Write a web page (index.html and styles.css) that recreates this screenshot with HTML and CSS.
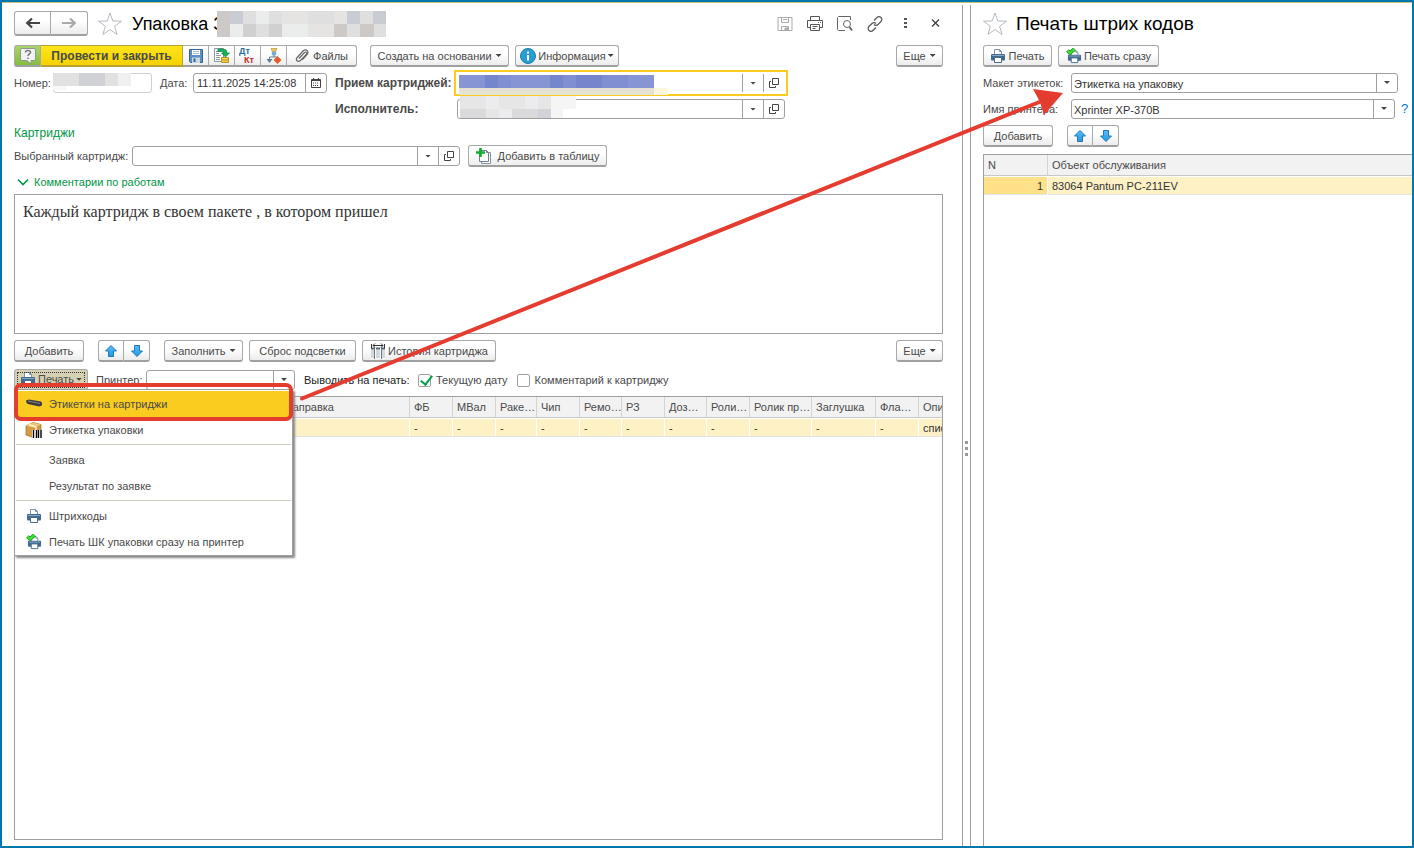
FILE: index.html
```html
<!DOCTYPE html>
<html lang="ru">
<head>
<meta charset="utf-8">
<title>Упаковка</title>
<link rel="stylesheet" href="styles.css">
</head>
<body>
<svg class="defs" aria-hidden="true">
  <defs>
    <linearGradient id="blue" x1="0" y1="0" x2="0" y2="1"><stop offset="0" stop-color="#4fc0ff"/><stop offset="1" stop-color="#2a96e0"/></linearGradient>
    <symbol id="star" viewBox="0 0 24 24"><path d="M12 1l2.800 8 8.700.2-6.900 5.100 2.500 8.200-7.100-4.900L4.900 22.500l2.500-8.200L.5 9.200l8.700-.2z" fill="#fff" stroke="#b4bac0"/></symbol>
    <symbol id="up" viewBox="0 0 12 12"><path d="M6 .5L11.500 6H8.500v5.500h-5V6H.5z" fill="url(#blue)" stroke="#2277b4"/></symbol>
    <symbol id="down" viewBox="0 0 12 12"><path d="M6 11.500L11.500 6H8.500V.5h-5V6H.5z" fill="url(#blue)" stroke="#2277b4"/></symbol>
    <symbol id="printer" viewBox="0 0 16 16"><path d="M4.500 6.500v-5h5l2 2v3" fill="#fff" stroke="#7d93a8"/><path d="M9.500 1.500v2h2" fill="none" stroke="#7d93a8"/><rect x="1" y="6" width="14" height="6.500" rx="1" fill="#416a93"/><path d="M2 7.500h12" stroke="#86a8c8"/><path d="M4.500 9.500h7v5h-7z" fill="#fff" stroke="#4a6c8c"/></symbol>
    <symbol id="printer-check" viewBox="0 0 16 16"><use href="#printer" x="1" y="1" width="15" height="15"/><path d="M1.500 2.500l2.500 2.500 4.500-4" fill="none" stroke="#16831b" stroke-width="3.800"/><path d="M1.500 2.500l2.500 2.500 4.500-4" fill="none" stroke="#3fe035" stroke-width="2.400"/></symbol>
    <symbol id="open" viewBox="0 0 10 10"><path d="M3.500.5h6v6h-6zM2 3.500H.5v6h6V8" fill="none" stroke="#444"/></symbol>
  </defs>
</svg>
<div class="app">
  <main class="pane pane-main">
    <header class="title-row">
      <div class="group nav">
        <button class="btn" type="button" aria-label="Назад"><svg width="16" height="12" viewBox="0 0 16 12"><path d="M15 6H3M7 1.500L2.200 6 7 10.500" fill="none" stroke="#444" stroke-width="2.200"/></svg></button>
        <button class="btn" type="button" aria-label="Вперед"><svg width="16" height="12" viewBox="0 0 16 12"><path d="M1 6h12M9 1.500L13.800 6 9 10.500" fill="none" stroke="#aaa" stroke-width="2.200"/></svg></button>
      </div>
      <svg class="star" width="24" height="24"><use href="#star"/></svg>
      <h1>Упаковка З</h1>
      <svg class="mosaic" width="169" height="26" viewBox="0 0 169 26" shape-rendering="crispEdges">
        <path fill="#dfdfe0" d="M0 0h170v26H0z"/>
        <path fill="#ccc9c7" d="M0 0h13v26H0zM117 13h13v13h-13zM143 13h14v13h-14z"/>
        <path fill="#c9cdd3" d="M13 0h13v13H13zM130 0h13v13h-13zM156 0h14v13h-14z"/>
        <path fill="#ebecec" d="M13 13h13v13H13zM39 0h13v13H39zM65 13h26v13H65z"/>
        <path fill="#d0d0d0" d="M26 13h13v13H26zM52 13h13v13H52z"/>
        <path fill="#e6e4e3" d="M65 0h26v13H65zM91 13h26v13H91zM117 0h13v13h-13z"/>
      </svg>
      <div class="window-tools">
        <button type="button" aria-label="Сохранить"><svg width="16" height="16" viewBox="0 0 16 16" fill="none" stroke="#aaa"><path d="M1 1.500h14v13H1zM4.500 1.500v5h7v-5M6 3.500h4M4.500 14.500v-4h7v4"/><path fill="#aaa" d="M8 12h3v2H8z"/></svg></button>
        <button type="button" aria-label="Печать"><svg width="16" height="16" viewBox="0 0 16 16" fill="none" stroke="#555"><path d="M3.500 4.500v-4h9v4M3.500 11.500h-3v-7h15v7h-3M3.500 8.500h9v6h-9zM5.500 10.500h5M5.500 12.500h3M11 6.500h1M13 6.500h1"/></svg></button>
        <button type="button" aria-label="Просмотр"><svg width="16" height="16" viewBox="0 0 16 16" fill="none" stroke="#666"><path d="M8 14.500H1.500l-1-1V1.500l1-1h12V4"/><circle cx="10" cy="8" r="3.500"/><path d="M12.500 11l2.500 3.500" stroke-width="2"/></svg></button>
        <button type="button" aria-label="Ссылка"><svg width="16" height="16" viewBox="0 0 16 16" fill="none" stroke="#555" stroke-width="1.200"><path d="M7 4.500l3-3a2.800 2.800 0 0 1 4 0 2.800 2.800 0 0 1 0 4L11 8.500a2.800 2.800 0 0 1-4 0M9 11.500l-3 3a2.800 2.800 0 0 1-4 0 2.800 2.800 0 0 1 0-4L5 7.500a2.800 2.800 0 0 1 4 0"/></svg></button>
        <button type="button" aria-label="Меню"><svg width="16" height="16" viewBox="0 0 16 16" fill="#555"><path d="M7 2h3v2H7zM7 6h3v2H7zM7 10h3v2H7z"/></svg></button>
        <button type="button" aria-label="Закрыть"><svg width="16" height="16" viewBox="0 0 16 16" fill="none" stroke="#444" stroke-width="1.400"><path d="M5 3.500l7 7M12 3.500l-7 7"/></svg></button>
      </div>
    </header>

    <div class="toolbar">
      <div class="group commands">
        <button class="btn help" type="button" aria-label="Справка"><svg width="18" height="18" viewBox="0 0 18 18"><path d="M3 1.500h12q1.500 0 1.500 1.500v9q0 1.500-1.500 1.500h-3V17l-4-3.500H3Q1.500 13.500 1.500 12V3Q1.500 1.500 3 1.500z" fill="#f1f3f2" stroke="#8b9a86"/><path d="M6.500 5.500q0-2 2.500-2t2.500 2c0 1.500-2.500 1.500-2.500 3.500M9 10.500v1.500" fill="none" stroke="#777" stroke-width="1.500"/></svg></button>
        <button class="btn primary" type="button">Провести и закрыть</button>
        <button class="btn icon" type="button" aria-label="Записать"><svg width="16" height="16" viewBox="0 0 16 16"><path d="M1.500 1.500h13v13h-12l-1-1z" fill="#5b8fc5" stroke="#376290"/><path d="M4 2h8v5H4z" fill="#fff"/><path d="M5 3.500h6M5 5.500h6" stroke="#aabdcd"/><path d="M4 9.500h8V15H4z" fill="#cbd8e3"/><path d="M5.500 10.500h2V14h-2z" fill="#376290"/></svg></button>
        <button class="btn icon" type="button" aria-label="Провести"><svg width="17" height="17" viewBox="0 0 17 17"><path d="M1.500 1.500h9v13h-9z" fill="#fff" stroke="#8999a6"/><path d="M3 4.500h4M3 6.500h3M3 8.500h5M3 10.500h4M3 12.500h4" stroke="#8999a6"/><path d="M5 2h5q4 0 4 4h2.500L12.500 10 8.500 6H11q0-1.500-2-1.500H5z" fill="#14b45a" stroke="#08843c" stroke-width=".7"/><path d="M8.500 10.500h7v5h-7z" fill="#f9d34b" stroke="#bd922a"/><path d="M8.500 13h7" stroke="#bd922a"/></svg></button>
        <button class="btn icon" type="button" aria-label="Проводки"><svg width="17" height="17" viewBox="0 0 17 17" font-family="Liberation Sans" font-weight="bold" font-size="9"><text x="0" y="7" fill="#2a709b">Дт</text><text x="5" y="16" fill="#c52b1e">Кт</text></svg></button>
        <button class="btn icon" type="button" aria-label="Структура"><svg width="16" height="16" viewBox="0 0 16 16"><path d="M8 6v3M3.500 12V9h8" fill="none" stroke="#687c8c"/><path d="M5 .5h6L9.500 4H6.500z" fill="#edc654" stroke="#b18a2b" stroke-width=".6"/><circle cx="8" cy="5.500" r="2.300" fill="#74acd7"/><path d="M.5 11h6l-3 4z" fill="#587b96"/><path d="M11.500 8l4 4-4 4-4-4z" fill="#e25d2c"/></svg></button>
        <button class="btn files" type="button"><svg width="14" height="14" viewBox="0 0 14 14"><path d="M4 9.500l5.500-6q1.200-1 2 0 .8 1-.2 2L5.500 11.500q-2 1.700-3.500.3-1.400-1.600.2-3.300L8 2q2.500-2 4.300-.3 1.500 2-.5 4.200L7.500 10.500" fill="none" stroke="#666" stroke-width="1.200"/></svg>Файлы</button>
      </div>
      <button class="btn create" type="button">Создать на основании<i class="caret"></i></button>
      <button class="btn info" type="button"><svg width="16" height="16" viewBox="0 0 16 16"><circle cx="8" cy="8" r="7.500" fill="#279dd3" stroke="#187bab"/><path d="M8 3.500v2M8 7v5.500" stroke="#fff" stroke-width="2"/></svg>Информация<i class="caret"></i></button>
      <button class="btn more" type="button">Еще<i class="caret"></i></button>
    </div>

    <div class="fields">
      <div class="field-line">
        <label for="num">Номер:</label>
        <div class="combo number"><input id="num"><svg class="mosaic-in" width="78" height="17" viewBox="0 0 78 17" shape-rendering="crispEdges"><path fill="#e1e1e2" d="M0 0h78v13H0z"/><path fill="#d0d1d5" d="M26 0h26v13H26z"/><path fill="#eff0f2" d="M65 0h13v13H65z"/><path fill="#f8f8f8" d="M0 13h13v4H0z"/></svg></div>
        <label class="date-label" for="date">Дата:</label>
        <div class="combo date"><input id="date" value="11.11.2025 14:25:08"><button type="button" aria-label="Календарь"><svg width="10" height="10" viewBox="0 0 10 10"><path d="M.5 1.500h9v8h-9z" fill="#fff" stroke="#444"/><path d="M1 2.500h8M2.500 0v2M7.500 0v2" stroke="#444"/><path d="M2 5h6M2 7.500h6" stroke="#444" stroke-dasharray="1 1"/></svg></button></div>
      </div>
      <div class="refs">
        <label for="rec">Прием картриджей:</label>
        <div class="combo active"><input id="rec"><button type="button" aria-label="Выбрать"><i class="caret"></i></button><button type="button" aria-label="Открыть"><svg width="10" height="10"><use href="#open"/></svg></button>
          <svg class="mosaic-in" width="209" height="20" viewBox="0 0 209 20" shape-rendering="crispEdges"><path fill="#8795d5" d="M0 0h195v13H0z"/><path fill="#7686cd" d="M26 0h13v13H26zM91 0h13v13H91zM117 0h26v13h-26z"/><path fill="#7f8fd2" d="M39 0h13v13H39zM104 0h13v13h-13zM143 0h26v13h-26z"/><path fill="#e5e2d3" d="M0 13h195v7H0z"/><path fill="#fdf6df" d="M195 13h14v7h-14z"/></svg></div>
        <label for="exec">Исполнитель:</label>
        <div class="combo"><input id="exec"><button type="button" aria-label="Выбрать"><i class="caret"></i></button><button type="button" aria-label="Открыть"><svg width="10" height="10"><use href="#open"/></svg></button>
          <svg class="mosaic-in exec" width="116" height="22" viewBox="0 0 116 22" shape-rendering="crispEdges"><path fill="#e6e6e7" d="M0 0h91v22H0z"/><path fill="#dadadc" d="M0 13h26v9H0zM52 13h26v9H52z"/><path fill="#ececee" d="M26 0h13v13H26zM65 0h13v13H65zM39 13h13v9H39z"/><path fill="#d2d2d8" d="M78 13h13v9H78z"/><path fill="#f5f5f5" d="M91 0h25v13h-13v9H91z"/></svg></div>
      </div>
    </div>

    <h2>Картриджи</h2>
    <div class="line">
      <label for="cart">Выбранный картридж:</label>
      <div class="combo cart"><input id="cart"><button type="button" aria-label="Выбрать"><i class="caret"></i></button><button type="button" aria-label="Открыть"><svg width="10" height="10"><use href="#open"/></svg></button></div>
      <button class="btn add-table" type="button"><svg width="16" height="16" viewBox="0 0 16 16"><path d="M5.500 4.500h9v11h-9z" fill="#fff" stroke="#8494a4"/><path d="M3.500 2.500h7l2 2v9h-9z" fill="#fff" stroke="#6f8093"/><path d="M10.500 2.500v2h2" fill="none" stroke="#6f8093"/><path d="M4.500 0v9M0 4.500h9" stroke="#10b02a" stroke-width="2.600"/></svg>Добавить в таблицу</button>
    </div>
    <button class="fold" type="button"><svg width="12" height="8" viewBox="0 0 12 8"><path d="M1 1.500l5 5 5-5" fill="none" stroke="#009646" stroke-width="1.600"/></svg>Комментарии по работам</button>
    <textarea class="comment" aria-label="Комментарии по работам">Каждый картридж в своем пакете , в котором пришел</textarea>

    <div class="toolbar list-bar">
      <button class="btn add" type="button">Добавить</button>
      <div class="group arrows"><button class="btn" type="button" aria-label="Вверх"><svg width="12" height="12"><use href="#up"/></svg></button><button class="btn" type="button" aria-label="Вниз"><svg width="12" height="12"><use href="#down"/></svg></button></div>
      <button class="btn fill" type="button">Заполнить<i class="caret"></i></button>
      <button class="btn reset" type="button">Сброс подсветки</button>
      <button class="btn history" type="button"><svg width="16" height="16" viewBox="0 0 16 16"><path d="M1 4h14v12H1z" fill="#fff"/><path d="M1 5.500h3M6 5.500h4M12 5.500h3" stroke="#53636f" stroke-width="2"/><path d="M1 8h3M6 8h4M12 8h3M1 10h3M6 10h4M12 10h3M1 12h3M6 12h4M12 12h3M1 14h3M6 14h4M12 14h3" stroke="#a4b4bc"/><path d="M4.500 4v12M11.500 4v12" stroke="#6a7a85"/><path d="M1.500 1v4M14.500 1v4M3 2.500h10M5 .5L3 2.500l2 2M11 .5l2 2-2 2" fill="none" stroke="#333"/></svg>История картриджа</button>
      <button class="btn more" type="button">Еще<i class="caret"></i></button>
    </div>

    <div class="line print-line">
      <div class="menu-host">
        <button class="btn pressed" type="button" aria-expanded="true"><svg width="16" height="16"><use href="#printer"/></svg>Печать<i class="caret"></i></button>
        <ul class="menu">
          <li><button class="selected" type="button"><svg width="18" height="16" viewBox="0 0 18 16"><path d="M1 4.500l3-1 12 2q1.500 1 1 4l-3 1L3 8Q1 7 1 4.500z" fill="#3c3c3e"/><path d="M3 5l12 2.500" stroke="#85858a"/></svg>Этикетки на картриджи</button></li>
          <li><button type="button"><svg width="18" height="18" viewBox="0 0 18 18"><path d="M1 5l7-3.500 8 2V14l-8 2.500L1 14z" fill="#d49b45" stroke="#9b6c25" stroke-width=".7"/><path d="M1 5l7-3.500 8 2L9 6.500z" fill="#f0c67c"/><path d="M4 3.500l7 2.500v3" fill="none" stroke="#fff0bf" stroke-width="1.500"/><path d="M7 9h10v8H7z" fill="#fff"/><path d="M8.500 9v8M11.500 9v8M13.500 9v8M16 9v8" stroke="#000" stroke-width="1.400"/></svg>Этикетка упаковки</button></li>
          <li class="sep"></li>
          <li><button type="button"><span class="no-icon"></span>Заявка</button></li>
          <li><button type="button"><span class="no-icon"></span>Результат по заявке</button></li>
          <li class="sep"></li>
          <li><button type="button"><svg width="18" height="16"><use href="#printer"/></svg>Штрихкоды</button></li>
          <li><button type="button"><svg width="18" height="16"><use href="#printer-check"/></svg>Печать ШК упаковки сразу на принтер</button></li>
        </ul>
      </div>
      <label for="prn">Принтер:</label>
      <div class="pick printer-pick"><select id="prn"><option></option></select><i class="caret"></i></div>
      <span class="hint">Выводить на печать:</span>
      <input class="tick" type="checkbox" id="curdate" checked><label for="curdate">Текущую дату</label>
      <input class="tick second" type="checkbox" id="cmt"><label for="cmt">Комментарий к картриджу</label>
    </div>

    <div class="grid-box">
      <table class="items">
        <colgroup><col class="c-first"><col class="c-refill"><col class="c43"><col class="c43"><col class="c41"><col class="c43"><col class="c42"><col class="c43"><col class="c42"><col class="c43"><col class="c62"><col class="c64"><col class="c43"><col></colgroup>
        <thead><tr><th></th><th>Заправка</th><th>ФБ</th><th>МВал</th><th>Раке…</th><th>Чип</th><th>Ремо…</th><th>РЗ</th><th>Доз…</th><th>Роли…</th><th>Ролик пр…</th><th>Заглушка</th><th>Фла…</th><th>Опи</th></tr></thead>
        <tbody><tr><td></td><td>ж</td><td>-</td><td>-</td><td>-</td><td>-</td><td>-</td><td>-</td><td>-</td><td>-</td><td>-</td><td>-</td><td>-</td><td>спис</td></tr></tbody>
      </table>
    </div>
  </main>

  <div class="splitter"><i></i><i></i><i></i></div>

  <aside class="pane pane-side">
    <header class="title-row">
      <svg class="star" width="24" height="24"><use href="#star"/></svg>
      <h1>Печать штрих кодов</h1>
    </header>
    <div class="toolbar side-bar">
      <button class="btn print" type="button"><svg width="16" height="16"><use href="#printer"/></svg>Печать</button>
      <button class="btn print-now" type="button"><svg width="16" height="16"><use href="#printer-check"/></svg>Печать сразу</button>
    </div>
    <div class="side-fields">
      <label for="layout">Макет этикеток:</label>
      <div class="pick"><select id="layout"><option>Этикетка на упаковку</option></select><i class="caret"></i></div>
      <label for="pname">Имя принтера:</label>
      <div class="with-help"><div class="pick"><select id="pname"><option>Xprinter XP-370B</option></select><i class="caret"></i></div><a href="#help">?</a></div>
    </div>
    <div class="toolbar side-list-bar">
      <button class="btn add" type="button">Добавить</button>
      <div class="group arrows"><button class="btn" type="button" aria-label="Вверх"><svg width="12" height="12"><use href="#up"/></svg></button><button class="btn" type="button" aria-label="Вниз"><svg width="12" height="12"><use href="#down"/></svg></button></div>
    </div>
    <div class="grid-box side-grid">
      <table class="objects">
        <colgroup><col class="c64"><col></colgroup>
        <thead><tr><th>N</th><th>Объект обслуживания</th></tr></thead>
        <tbody><tr><td class="current">1</td><td>83064 Pantum PC-211EV</td></tr></tbody>
      </table>
    </div>
  </aside>
  <svg class="callout" width="1100" height="440" viewBox="0 0 1100 440" aria-hidden="true">
    <rect x="16" y="385" width="275" height="34" rx="5" fill="none" stroke="#e53c30" stroke-width="4"/>
    <path d="M302 398.500L1042 101" stroke="#e53c30" stroke-width="4" stroke-linecap="round"/>
    <path d="M1063 93l-30-4 7 13 4 13z" fill="#e53c30"/>
  </svg>
</div>
</body>
</html>
```
FILE: styles.css
```css
* { box-sizing: border-box; }
body { margin: 0; font: 11px/16px "Liberation Sans", Arial, sans-serif; color: #4a4a4a; background: #fff; }
button, input, select, textarea { font: inherit; color: inherit; margin: 0; padding: 0; }
svg { flex: none; display: block; }
.defs { position: absolute; width: 0; height: 0; }
.app { position: relative; display: flex; min-height: 100vh; border: 2px solid #0078ab; box-shadow: inset 0 1px #cdbd83; }
.pane { display: flex; flex-direction: column; padding-top: 9px; min-width: 0; }
.pane-main { flex: 1; padding-left: 12px; padding-right: 19px; padding-bottom: 6px; }
.pane-side { flex: 0 1 441px; padding-left: 12px; }

.title-row { display: flex; align-items: center; height: 25px; margin-bottom: 9px; }
h1 { margin: 0; font-size: 18px; line-height: 24px; font-weight: 400; color: #000; white-space: nowrap; }
.pane-side h1 { font-size: 19px; }
.star { margin: 0 10px; }
.pane-side .star { margin: 0 9px 0 0; }
.mosaic { margin-left: -7px; }
.window-tools { display: flex; gap: 14px; margin-left: auto; }
.window-tools button { border: 0; background: none; }

.btn { display: inline-flex; align-items: center; justify-content: center; gap: 4px; height: 22px; padding: 0 4px; white-space: nowrap; border: 1px solid #a9a9a9; border-bottom: 2px solid #a0a0a0; border-radius: 3px; background: linear-gradient(#fff 40%, #ececec); }
.group { display: flex; }
.group .btn { border-radius: 0; }
.group .btn + .btn { border-left: 0; }
.group .btn:first-child { border-radius: 3px 0 0 3px; }
.group .btn:last-child { border-radius: 0 3px 3px 0; }
.nav .btn { width: 37px; height: 25px; }
.caret { flex: none; width: 6px; height: 3px; background: #444; clip-path: polygon(0 0, 100% 0, 50% 100%); }
.toolbar { display: flex; align-items: center; }
.commands .help { width: 27px; background: linear-gradient(#a9d36a, #87bd3e); }
.commands .primary { width: 142px; font-weight: 700; font-size: 12px; background: linear-gradient(#ffe51a, #f5d200); border-color: #b9a233; }
.commands .icon { width: 26px; }
.commands .files { width: 70px; }
.create { width: 139px; margin-left: 13px; }
.info { width: 104px; margin-left: 6px; }
.info, .pressed, .print, .print-now { gap: 2px; }
.more { width: 47px; margin-left: auto; }

.fields { display: flex; margin-top: 6px; }
.field-line { display: flex; align-items: center; height: 20px; }
.field-line label { width: 39px; }
.field-line .date-label { width: 33px; margin-left: 8px; }
.refs { display: grid; grid-template-columns: 122px 328px; row-gap: 6px; margin-left: 8px; line-height: 20px; }
.refs label { font-size: 12px; font-weight: 700; white-space: nowrap; }
.combo { position: relative; display: flex; height: 20px; border: 1px solid #a0a0a0; border-radius: 3px; background: #fff; }
.combo input { flex: 1; min-width: 0; border: 0; background: none; padding: 0 3px; color: #333; outline: 0; }
.combo button { width: 21px; border: 0; border-left: 1px solid #a0a0a0; background: none; display: flex; align-items: center; justify-content: center; }
.combo.active { border-color: #fff; outline: 2px solid #facc1f; outline-offset: 1px; border-radius: 0; }
.number { width: 99px; border-color: #d0d0d0; }
.date { width: 134px; }
.mosaic-in { position: absolute; left: 1px; top: 1px; }
.number .mosaic-in { left: -1px; top: -1px; }
.mosaic-in.exec { left: 2px; top: -4px; }

h2 { margin: 6px 0 5px; font-size: 12px; line-height: 16px; font-weight: 400; color: #009646; }
.line { display: flex; align-items: center; height: 20px; }
.line > label[for="cart"] { width: 118px; white-space: nowrap; }
.cart { width: 328px; }
.add-table { width: 139px; margin-left: 8px; gap: 6px; }
.fold { align-self: flex-start; display: flex; align-items: center; gap: 5px; height: 16px; margin: 8px 0 4px 3px; border: 0; background: none; color: #009646; }
.comment { height: 140px; padding: 8px; resize: none; border: 1px solid #a0a0a0; font: 16px/18px "Liberation Serif", "Times New Roman", serif; color: #333; }

.list-bar { margin-top: 6px; }
.add { width: 70px; }
.arrows { margin: 0 14px; }
.arrows .btn { width: 26px; }
.fill { width: 79px; }
.reset { width: 107px; margin: 0 6px; }
.history { width: 134px; gap: 2px; }

.print-line { margin-top: 8px; }
.menu-host { position: relative; width: 74px; margin-right: 8px; }
.pressed { width: 74px; background: #d6d1b4; outline: 1px dotted #333; outline-offset: -4px; }
.print-line > label[for="prn"] { width: 50px; }
.pick { position: relative; display: flex; min-width: 0; flex: 1; height: 20px; }
.pick select { appearance: none; width: 100%; padding: 0 24px 2px 2px; border: 1px solid #a0a0a0; border-radius: 3px; background: linear-gradient(#a0a0a0, #a0a0a0) right 20px top / 1px 100% no-repeat #fff; color: #333; }
.pick .caret { position: absolute; right: 8px; top: 8px; pointer-events: none; }
.printer-pick { flex: none; width: 149px; }
.hint { width: 114px; margin-left: 9px; color: #222; white-space: nowrap; }
.tick { appearance: none; flex: none; width: 13px; height: 13px; margin-right: 5px; border: 1px solid #a0a0a0; border-radius: 2px; background: #fff; position: relative; }
.tick.second { margin-left: 9px; }
.tick:checked::after { content: ""; position: absolute; left: 4px; top: -2px; width: 5px; height: 10px; border: solid #00a04a; border-width: 0 2px 2px 0; transform: rotate(38deg); }

.menu { position: absolute; z-index: 2; left: 0; top: 20px; width: 279px; margin: 0; padding: 1px 0 0; list-style: none; background: #fff; border: 1px solid #a0a0a0; box-shadow: 2px 2px 2px #888; }
.menu button { display: flex; align-items: center; gap: 6px; width: 100%; height: 26px; padding: 0 10px; border: 0; background: none; text-align: left; white-space: nowrap; }
.menu .selected { background: #facc1f; }
.no-icon { width: 18px; }
.sep { height: 1px; margin: 1px 1px 2px; background: #d3ceb7; }

.grid-box { flex: 1; margin-top: 6px; border: 1px solid #a0a0a0; overflow: hidden; }
table { width: 100%; table-layout: fixed; border-collapse: separate; border-spacing: 0; }
th, td { overflow: hidden; white-space: nowrap; padding: 0 4px; text-align: left; font-weight: 400; }
th { height: 21px; background: #f2f2f2; border-right: 1px solid #d4d4d4; border-bottom: 1px solid #c8c8c8; }
td { height: 19px; background: #fef1c6; border-right: 1px solid #fff; border-top: 1px solid #fff; border-bottom: 1px solid #e4e4e4; color: #333; }
th:last-child, td:last-child { padding-right: 0; border-right: 0; }
.c-first { width: 267px; } .c-refill { width: 128px; }
.c41 { width: 41px; } .c42 { width: 42px; } .c43 { width: 43px; } .c62 { width: 62px; } .c64 { width: 64px; }

.splitter { flex: none; width: 9px; margin-top: 3px; border: solid #a0a0a0; border-width: 0 1px; display: flex; flex-direction: column; align-items: center; justify-content: center; gap: 3px; padding-top: 46px; }
.splitter i { width: 3px; height: 3px; background: #999; }

.print { width: 69px; }
.print-now { width: 101px; margin-left: 6px; }
.side-fields { display: grid; grid-template-columns: 88px 1fr; row-gap: 6px; margin: 6px 14px 6px 0; line-height: 20px; }
.with-help { display: flex; gap: 6px; margin-right: -11px; }
.with-help a { width: 8px; font-size: 13px; color: #0078c8; text-decoration: none; }
.side-grid { margin-top: 7px; border-right: 0; border-bottom: 0; }
.objects .current { text-align: right; background: #ffe18a; }

.callout { position: absolute; z-index: 3; left: -2px; top: -2px; pointer-events: none; }
```
